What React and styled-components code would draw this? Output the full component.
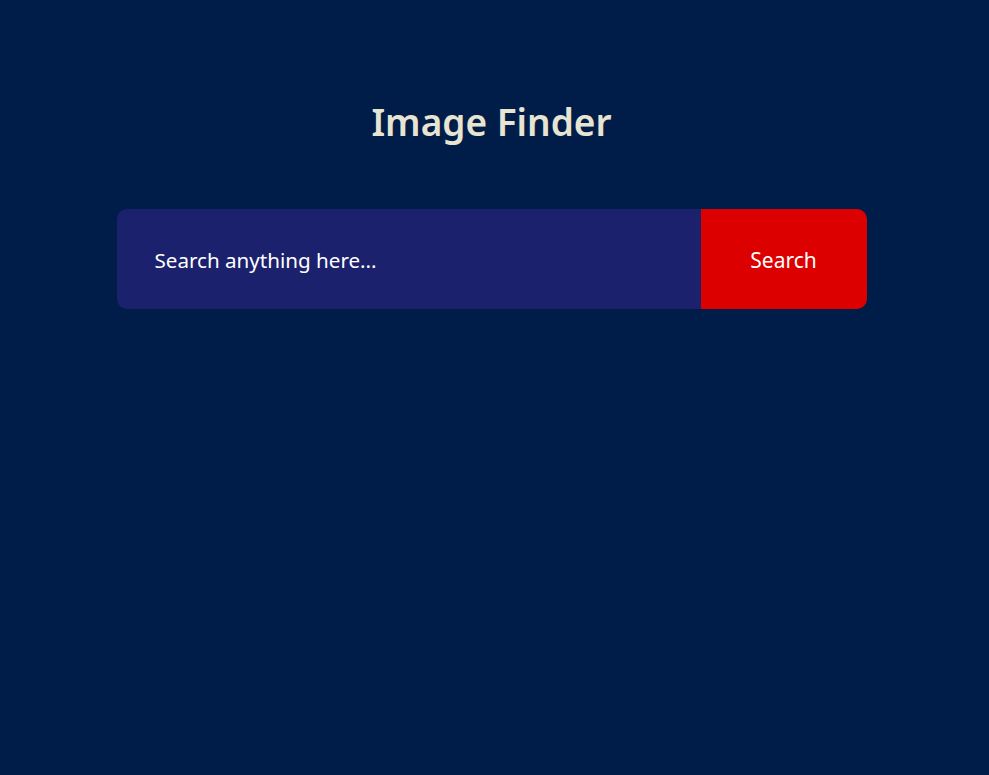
import React from 'react'
import styled, { createGlobalStyle } from 'styled-components'

const GlobalStyle = createGlobalStyle`
  html, body {
    margin: 0;
    padding: 0;
    background: #001d4a;
    font-family: "Noto Sans", "Open Sans", sans-serif;
  }
`

const Page = styled.div`
  min-height: 775px;
  background: #001d4a;
  display: flex;
  flex-direction: column;
  align-items: center;
  padding-top: 96px;
  box-sizing: border-box;
`

const Title = styled.h1`
  margin: 0;
  color: #e8e4d2;
  font-size: 37px;
  font-weight: 600;
  line-height: 52px;
  letter-spacing: 0;
  transform: translateX(-3px);
`

const Form = styled.form`
  margin-top: 61px;
  width: 750px;
  height: 100px;
  display: flex;
  border-radius: 10px;
  overflow: hidden;
  transform: translateX(-3px);
`

const Input = styled.input`
  flex: 1;
  border: none;
  outline: none;
  background: #1c216e;
  color: #fff;
  font-family: inherit;
  font-size: 20.6px;
  padding: 2px 0 0 38px;
  &::placeholder {
    color: #fff;
    opacity: 1;
  }
`

const Button = styled.button`
  width: 166px;
  border: none;
  background: #dd0000;
  color: #fff;
  font-family: inherit;
  font-size: 21px;
  padding: 2px 0 0;
  cursor: pointer;
`

export default function App() {
  return (
    <>
      <GlobalStyle />
      <Page>
        <Title>Image Finder</Title>
        <Form onSubmit={e => e.preventDefault()}>
          <Input placeholder="Search anything here..." />
          <Button type="submit">Search</Button>
        </Form>
      </Page>
    </>
  )
}
